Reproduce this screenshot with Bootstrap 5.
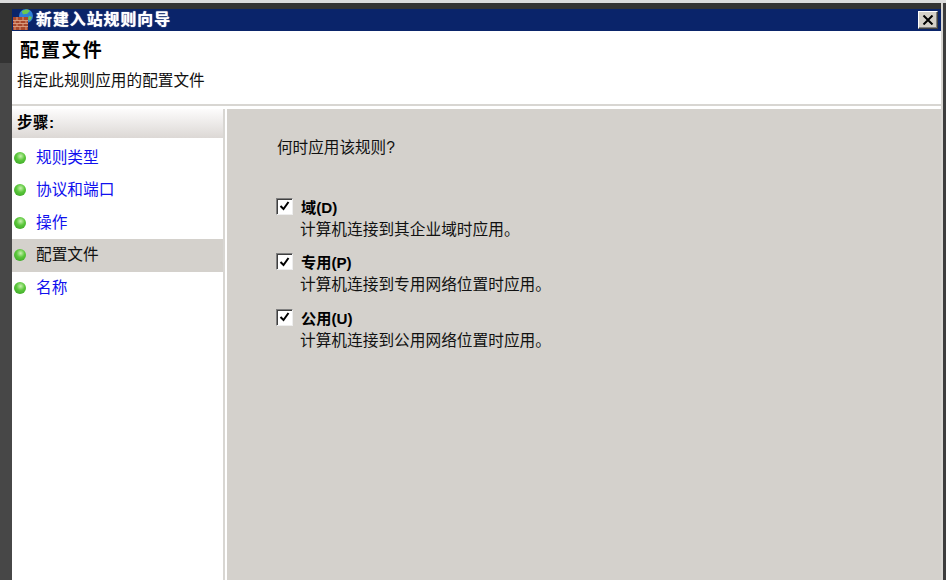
<!doctype html>
<html lang="zh-CN">
<head>
<meta charset="utf-8">
<title>新建入站规则向导</title>
<link href="https://cdn.jsdelivr.net/npm/bootstrap@5.3.0/dist/css/bootstrap.min.css" rel="stylesheet">
<style>
html,body{width:946px;height:580px;overflow:hidden;margin:0}
body{background:#444;font-family:"Liberation Sans","Noto Sans CJK SC",sans-serif;font-size:15.7px;line-height:20px;color:#111}
.top-strip{height:3px;background:#dcdcdc}
.shell{height:577px;background:linear-gradient(#333 0,#333 60px,#474747 60px)}
.win-col{margin-left:12px;width:929px;height:100%;padding-top:6px}
.edge-r{width:5px;background:linear-gradient(90deg,#d8d6d2 0,#d8d6d2 2px,#3d3d3d 2px)}
.titlebar{height:22px;background:#0a246a;color:#fff;font-weight:700;font-size:15.9px}
.titlebar .t-text{margin-left:1px;letter-spacing:1px;text-shadow:0 0 1px #fff}
.closebox{width:20px;height:18px;margin-right:3px;background:#d4d0c8;border:1px solid;border-color:#fff #404040 #404040 #fff;box-shadow:inset -1px -1px 0 #808080}
.headpane{height:73px;background:#fff;padding:8px 0 0 5px}
.head-big{font-size:19px;font-weight:700;letter-spacing:1.9px;line-height:24px;margin-left:3px;color:#000}
.head-sub{margin-top:8px;font-size:15.65px;line-height:20px}
.rule-a{height:2px;background:#d8d6d2}
.rule-b{height:3px;background:#fff}
.bodypane{height:472px;background:#fff}
.sidebar{width:211px;background:#fff}
.steps-head{height:29px;background:linear-gradient(#fdfcfc,#dcd8d5);font-weight:700;padding:4px 0 0 5px;font-size:15.5px;letter-spacing:.5px;color:#000;margin-bottom:3.500px}
.step-row{height:32.6px;padding-left:2px;color:#1111ee}
.step-row.on{background:#d4d1cc;color:#111}
.step-dot{width:12px;height:12px;border-radius:50%;background:radial-gradient(circle at 55% 35%,#c8f0b0 0,#5cc83c 40%,#2f9a1e 100%);margin-right:10px}
.gutter{width:4px;background:linear-gradient(90deg,#d8d6d2 0,#d8d6d2 2px,#fff 2px)}
.mainpane{background:#d4d1cc;padding:29px 0 0 49px}
.ask{line-height:20px;font-size:15.6px;margin-bottom:40px;margin-left:1px}
.opt{height:55.5px}
.tick{width:17px;height:17px;background:#fff;border:1px solid;border-color:#808080 #eee #eee #808080;box-shadow:inset 1px 1px 0 #404040;margin-right:8px}
.opt-name{font-weight:700;line-height:20px;font-size:15.2px;color:#000}
.opt-note{line-height:20px;font-size:15.7px;margin-top:2px;margin-left:-1px}
</style>
</head>
<body>
<div class="top-strip"></div>
<div class="shell d-flex">
  <div class="win-col d-flex flex-column">
    <div class="titlebar d-flex align-items-center">
      <svg width="23" height="22" viewBox="0 0 23 22" aria-hidden="true">
        <circle cx="14" cy="7" r="7" fill="#2f7fd8"/><path d="M10 2c3-2 6-2 8 0-2 1-2 3-4 3s-2 1-3 0-1-2-1-3zM17 7l3 1-2 4-2-2z" fill="#6cc850"/>
        <rect x="1" y="8" width="15" height="13" fill="#a9482c"/>
        <path d="M1 11.500h15M1 14.500h15M1 17.500h15M5 8v3.500M11 8v3.500M3 11.500v3M8 11.500v3M14 11.500v3M5 14.500v3M11 14.500v3M3 17.500v3.500M8 17.500v3.500M14 17.500v3.500" stroke="#d89a7e" stroke-width="1" fill="none"/>
      </svg>
      <span class="t-text">新建入站规则向导</span>
      <span class="closebox ms-auto d-flex align-items-center justify-content-center">
        <svg width="12" height="10" viewBox="0 0 12 10" aria-hidden="true"><path d="M1.500 .5l9 9M10.500 .5l-9 9" stroke="#000" stroke-width="2" fill="none"/></svg>
      </span>
    </div>
    <div class="headpane">
      <div class="head-big">配置文件</div>
      <div class="head-sub">指定此规则应用的配置文件</div>
    </div>
    <div class="rule-a"></div>
    <div class="rule-b"></div>
    <div class="bodypane d-flex">
      <div class="sidebar flex-shrink-0">
        <div class="steps-head">步骤:</div>
        <div class="step-row d-flex align-items-center"><span class="step-dot"></span>规则类型</div>
        <div class="step-row d-flex align-items-center"><span class="step-dot"></span>协议和端口</div>
        <div class="step-row d-flex align-items-center"><span class="step-dot"></span>操作</div>
        <div class="step-row on d-flex align-items-center"><span class="step-dot"></span>配置文件</div>
        <div class="step-row d-flex align-items-center"><span class="step-dot"></span>名称</div>
      </div>
      <div class="gutter flex-shrink-0"></div>
      <div class="mainpane flex-grow-1">
        <div class="ask">何时应用该规则?</div>
        <div class="opt d-flex">
          <span class="tick d-flex align-items-center justify-content-center flex-shrink-0"><svg width="11" height="10" viewBox="0 0 11 10" aria-hidden="true"><path d="M1.500 5l3 3 5-7" stroke="#000" stroke-width="2" fill="none"/></svg></span>
          <div><div class="opt-name">域(D)</div><div class="opt-note">计算机连接到其企业域时应用。</div></div>
        </div>
        <div class="opt d-flex">
          <span class="tick d-flex align-items-center justify-content-center flex-shrink-0"><svg width="11" height="10" viewBox="0 0 11 10" aria-hidden="true"><path d="M1.500 5l3 3 5-7" stroke="#000" stroke-width="2" fill="none"/></svg></span>
          <div><div class="opt-name">专用(P)</div><div class="opt-note">计算机连接到专用网络位置时应用。</div></div>
        </div>
        <div class="opt d-flex">
          <span class="tick d-flex align-items-center justify-content-center flex-shrink-0"><svg width="11" height="10" viewBox="0 0 11 10" aria-hidden="true"><path d="M1.500 5l3 3 5-7" stroke="#000" stroke-width="2" fill="none"/></svg></span>
          <div><div class="opt-name">公用(U)</div><div class="opt-note">计算机连接到公用网络位置时应用。</div></div>
        </div>
      </div>
    </div>
  </div>
  <div class="edge-r flex-shrink-0"></div>
</div>
</body>
</html>
